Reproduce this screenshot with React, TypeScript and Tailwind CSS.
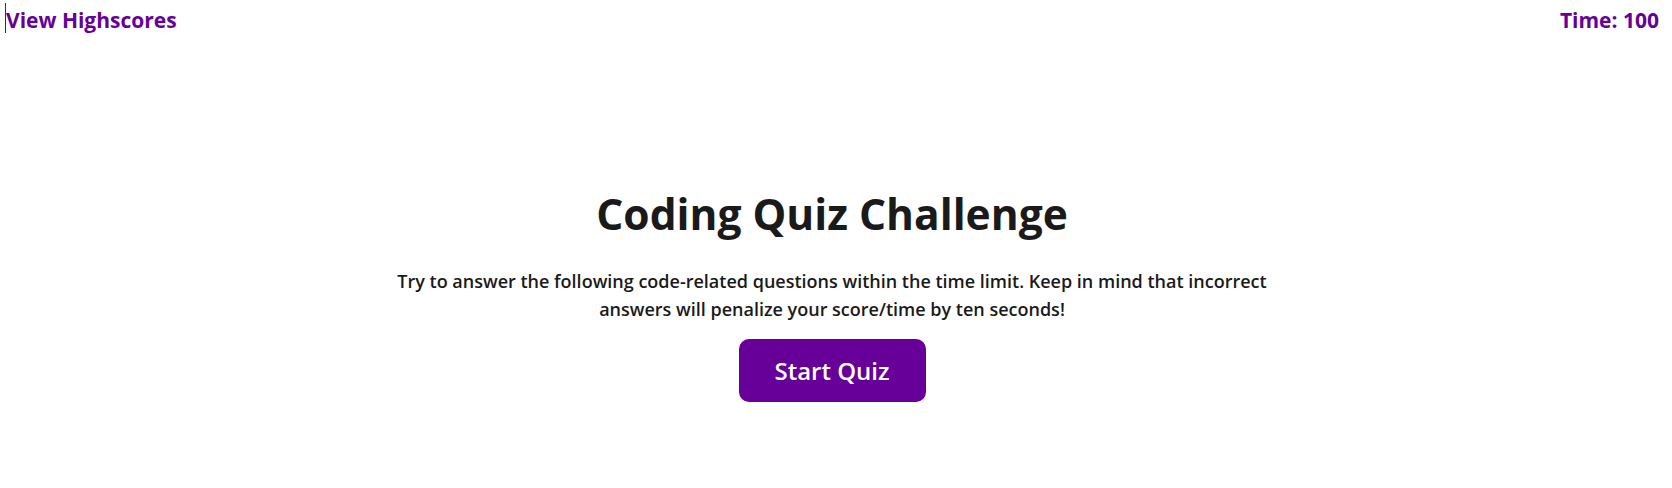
export default function App() {
  return (
    <div className="min-h-[488px] bg-white font-['Open_Sans',sans-serif]">
      {/* top bar */}
      <header className="flex items-start justify-between pl-[6px] pr-[13px] pt-[6px]">
        <a href="#" className="relative text-[21px] font-bold leading-[28px] text-[#660099]">
          <span className="absolute left-[-1px] top-[-3px] h-[30px] w-px bg-[#660099]" />
          View Highscores
        </a>
        <span className="text-[21px] font-bold leading-[28px] text-[#660099]">Time: 100</span>
      </header>

      <main className="flex flex-col items-center pr-[8px] pt-[154px] text-center">
        <h1 className="text-[42.5px] font-bold leading-[52px] text-[#1a1a1a]">Coding Quiz Challenge</h1>
        <p className="mt-[27px] w-[900px] text-[18px] font-semibold leading-[28px] text-[#1a1a1a]">
          Try to answer the following code-related questions within the time limit. Keep in mind that incorrect
          answers will penalize your score/time by ten seconds!
        </p>
        <button className="mt-[16px] h-[63px] w-[187px] rounded-[10px] bg-[#660099] text-[24px] font-semibold text-white">
          Start Quiz
        </button>
      </main>
    </div>
  );
}
